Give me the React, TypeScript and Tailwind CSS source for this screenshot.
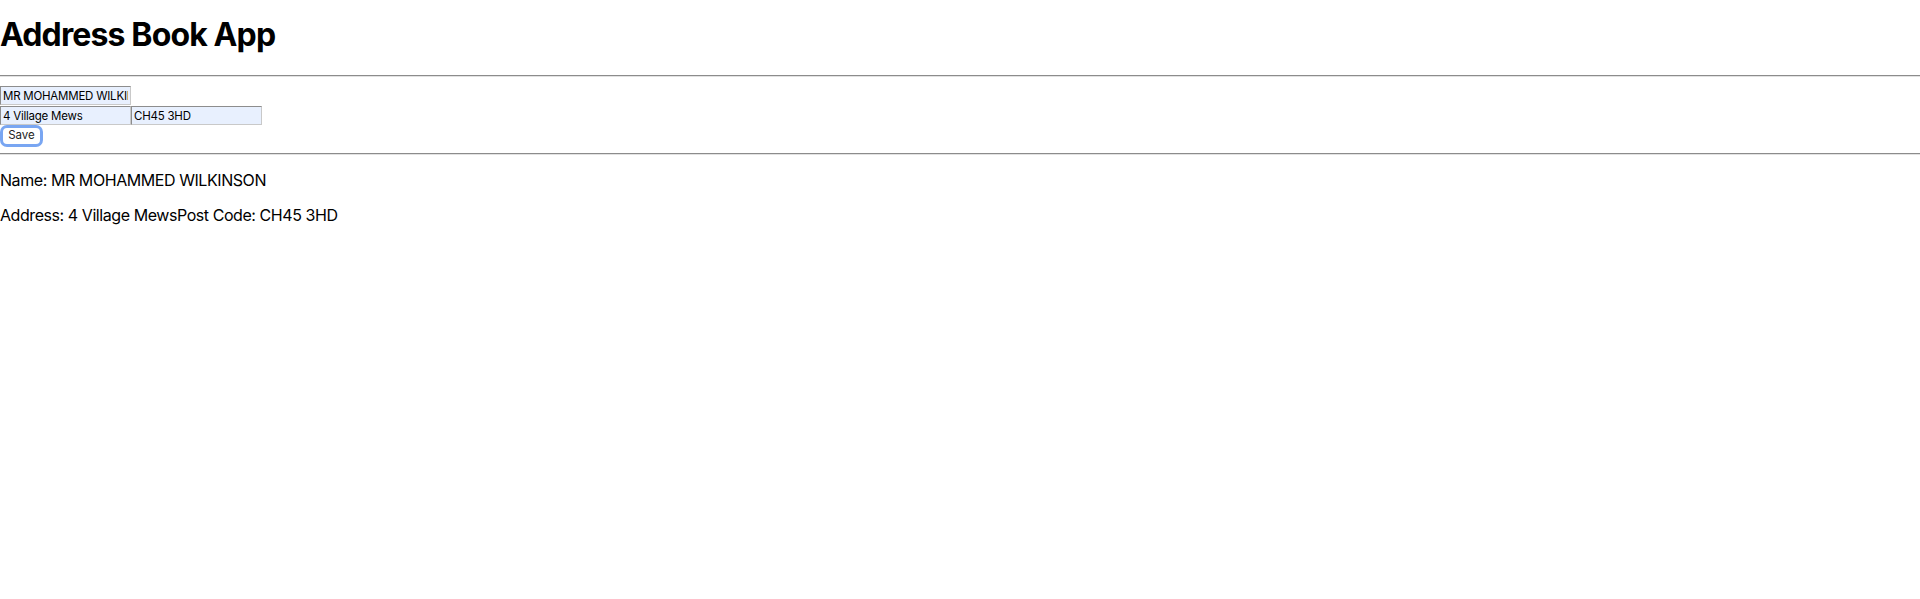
import React from "react";

export default function App() {
  return (
    <div className="min-h-[599px] bg-white text-black" style={{ fontFamily: "Inter, 'Noto Sans', sans-serif" }}>
      <h1 className="mt-[15px] mb-[21px] text-[32px] leading-[39px] font-bold tracking-[-0.027em]">Address Book App</h1>
      <hr className="h-0 border-t border-b border-t-[#8c8c8c] border-b-[#e2e2e2]" />
      <div className="mt-[9px] flex flex-col">
        <div className="flex">
          <input
            readOnly
            value="MR MOHAMMED WILKINSON"
            className="h-[19px] w-[131px] border border-[#8d8d8d] border-b-[#c9c9c9] border-r-[#c9c9c9] bg-[#e8f0fe] px-[2px] text-[11.5px] tracking-[-0.02em] text-black outline-none"
          />
        </div>
        <div className="mt-[1px] flex">
          <input
            readOnly
            value="4 Village Mews"
            className="h-[19px] w-[131px] border border-[#8d8d8d] border-b-[#c9c9c9] border-r-[#c9c9c9] bg-[#e8f0fe] px-[2px] text-[11.5px] tracking-[-0.02em] text-black outline-none"
          />
          <input
            readOnly
            value="CH45 3HD"
            className="h-[19px] w-[131px] border border-[#8d8d8d] border-b-[#c9c9c9] border-r-[#c9c9c9] bg-[#e8f0fe] px-[2px] text-[11.5px] tracking-[-0.02em] text-black outline-none"
          />
        </div>
        <div className="flex">
          <button className="h-[22px] w-[43px] rounded-[7px] border-[3px] border-[#79a6f2] bg-white text-[11.5px] leading-none text-[#222]">
            Save
          </button>
        </div>
      </div>
      <hr className="mt-[6px] h-0 border-t border-b border-t-[#8c8c8c] border-b-[#e2e2e2]" />
      <p className="mt-[16px] text-[16px] leading-[19px] tracking-[-0.027em]">Name: MR MOHAMMED WILKINSON</p>
      <p className="mt-[16px] text-[16px] leading-[19px] tracking-[-0.027em]">Address: 4 Village MewsPost Code: CH45 3HD</p>
    </div>
  );
}
